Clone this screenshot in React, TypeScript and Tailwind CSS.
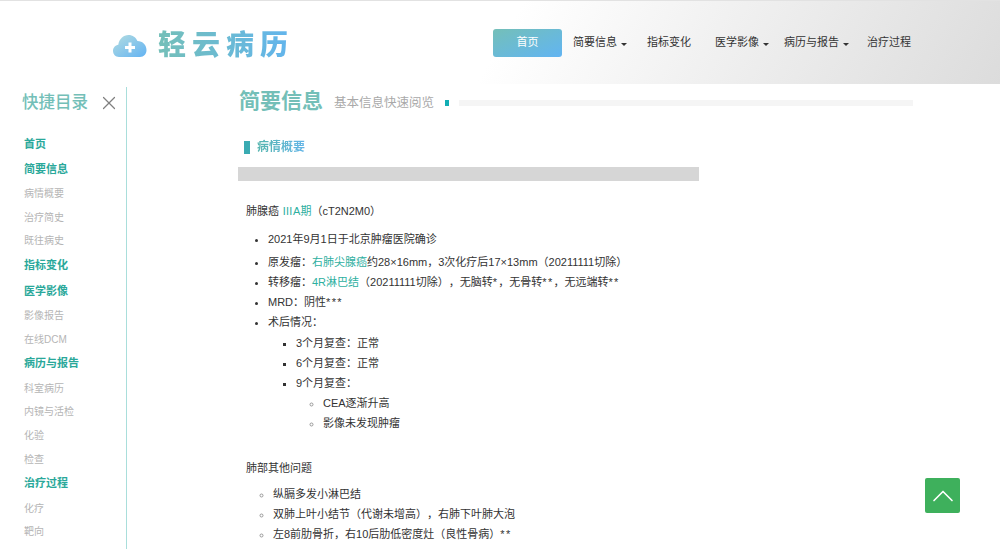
import { ChevronUp, X } from 'lucide-react';

const cjk = "font-['Liberation_Sans','Noto_Sans_CJK_SC',sans-serif]";

function Caret() {
  return <span className="ml-[4px] mt-[4px] inline-block border-x-[3.500px] border-t-[3.500px] border-x-transparent border-t-[#333]" />;
}

function Logo() {
  return (
    <div className="flex items-center">
      <svg width="34" height="24" viewBox="0 0 34 24">
        <defs>
          <linearGradient id="cloud" x1="0" y1="0" x2="1" y2="1">
            <stop offset="0" stopColor="#b4dde0" />
            <stop offset="1" stopColor="#63b3f3" />
          </linearGradient>
        </defs>
        <path
          d="M6 23C2.500 23 0 20.300 0 16.800C0 13.600 2.300 11.200 5.300 10.700C6 5 10.500 1 15.500 1C19.700 1 23 3.400 24.400 7C29.800 7 33.500 11 33.500 16C33.500 20 30.800 23 27 23Z"
          fill="url(#cloud)"
        />
        <path d="M15.500 8.500H18.500V12H22V15H18.500V18.500H15.500V15H12V12H15.500Z" fill="#fff" />
      </svg>
      <span className="ml-[11px] bg-gradient-to-r from-[#74bfb8] to-[#62b4ee] bg-clip-text text-[28px] leading-[36px] font-black tracking-[6px] text-transparent">
        轻云病历
      </span>
    </div>
  );
}

function Header() {
  const nav = [
    { label: '简要信息', caret: true, w: 'w-[74px]' },
    { label: '指标变化', caret: false, w: 'w-[68px]' },
    { label: '医学影像', caret: true, w: 'w-[69px]' },
    { label: '病历与报告', caret: true, w: 'w-[83px]' },
    { label: '治疗过程', caret: false, w: 'w-[45px]' },
  ];
  return (
    <header className="flex h-[84px] items-center border-t border-[#e2e2e2] bg-[linear-gradient(120deg,#ffffff_50%,#dcdcdc_100%)] pl-[113px]">
      <div className="w-[380px] pt-[7px]">
        <Logo />
      </div>
      <nav className="flex items-center text-[11px] text-[#333]">
        <a className="mr-[11px] flex h-[28px] w-[69px] items-center justify-center rounded-[3px] bg-gradient-to-br from-[#74bfb8] to-[#62b4f2] text-white">
          首页
        </a>
        {nav.map((item) => (
          <a key={item.label} className={`flex items-center whitespace-nowrap ${item.w}`}>
            {item.label}
            {item.caret && <Caret />}
          </a>
        ))}
      </nav>
    </header>
  );
}

function Sidebar() {
  const items: [string, boolean][] = [
    ['首页', true],
    ['简要信息', true],
    ['病情概要', false],
    ['治疗简史', false],
    ['既往病史', false],
    ['指标变化', true],
    ['医学影像', true],
    ['影像报告', false],
    ['在线DCM', false],
    ['病历与报告', true],
    ['科室病历', false],
    ['内镜与活检', false],
    ['化验', false],
    ['检查', false],
    ['治疗过程', true],
    ['化疗', false],
    ['靶向', false],
    ['免疫', false],
  ];
  return (
    <aside className="mt-[3px] h-[600px] w-[127px] shrink-0 border-r border-[#a9dedb] pl-[22px]">
      <div className="flex h-[30px] items-center pt-[1px]">
        <span className="text-[16.500px] font-medium text-[#74bfb8]">快捷目录</span>
        <X className="ml-[10px] text-[#808080]" size={22} strokeWidth={1.3} />
      </div>
      <ul className="mt-[14px] pl-[2px]">
        {items.map(([label, main]) => (
          <li
            key={label}
            className={
              main
                ? 'flex h-[25.500px] items-center text-[11px] font-semibold text-[#2aa89a]'
                : 'flex h-[23.600px] items-center text-[10px] text-[#b5b5b5]'
            }
          >
            {label}
          </li>
        ))}
      </ul>
    </aside>
  );
}

function Teal({ children }: { children: string }) {
  return <span className="text-[#2eaf9f]">{children}</span>;
}

// asterisks run wider in the reference's font
function Stars({ children }: { children: string }) {
  return <span className="tracking-[1.300px]">{children}</span>;
}

function Content() {
  return (
    <main className="w-[786px] pl-[111px] text-[11px] leading-[20.100px] text-[#333] [text-spacing-trim:space-all]">
      <div className="mt-[2px] flex h-[30px] items-center">
        <h2 className="ml-[1px] text-[21px] font-semibold text-[#74bfb8]">简要信息</h2>
        <span className="ml-[11px] mt-[5px] text-[12.500px] text-[#a9a9a9]">基本信息快速阅览</span>
        <span className="ml-[11px] mt-[4px] h-[6px] w-[4px] bg-[#12aeb4]" />
        <span className="ml-[10px] mt-[4px] h-[6px] flex-1 bg-[#f5f5f5]" />
      </div>
      <div className="mt-[23px] flex h-[16px] items-center pl-[6px]">
        <span className="h-[13px] w-[6px] bg-[#3aabb2]" />
        <h3 className="ml-[7px] bg-gradient-to-r from-[#56b5ae] to-[#62b4e8] bg-clip-text text-[12px] font-bold text-transparent">
          病情概要
        </h3>
      </div>
      <div className="mt-[12px] h-[14px] w-[461px] bg-[#d6d6d6]" />
      <div className="pl-[8px]">
        <p className="mt-[20px]">
          肺腺癌 <Teal>ⅢA期</Teal>（cT2N2M0）
        </p>
        <ul className="mt-[8px] list-disc pl-[22px]">
          <li className="mb-[3px]">2021年9月1日于北京肿瘤医院确诊</li>
          <li>
            原发瘤：<Teal>右肺尖腺癌</Teal>约28×16mm，3次化疗后17×13mm（20211111切除）
          </li>
          <li>
            转移瘤：<Teal>4R淋巴结</Teal>（20211111切除），无脑转<Stars>*</Stars>，无骨转<Stars>**</Stars>，无远端转<Stars>**</Stars>
          </li>
          <li>
            MRD：阴性<Stars>***</Stars>
          </li>
          <li>
            术后情况：
            <ul className="list-[square] pl-[28px]">
              <li>3个月复查：正常</li>
              <li>6个月复查：正常</li>
              <li>
                9个月复查：
                <ul className="list-[circle] pl-[27px] marker:text-[#999]">
                  <li>CEA逐渐升高</li>
                  <li>影像未发现肿瘤</li>
                </ul>
              </li>
            </ul>
          </li>
        </ul>
        <p className="mt-[25px]">肺部其他问题</p>
        <ul className="mt-[6px] list-[circle] pl-[27px] marker:text-[#999]">
          <li>纵膈多发小淋巴结</li>
          <li>双肺上叶小结节（代谢未增高），右肺下叶肺大泡</li>
          <li>
            左8前肋骨折，右10后肋低密度灶（良性骨病）<Stars>**</Stars>
          </li>
        </ul>
      </div>
    </main>
  );
}

export default function App() {
  return (
    <div className={`relative h-[549px] w-[1000px] overflow-hidden bg-white ${cjk}`}>
      <Header />
      <div className="flex">
        <Sidebar />
        <Content />
      </div>
      <button className="absolute left-[925px] top-[478px] flex h-[35px] w-[35px] items-center justify-center rounded-[2px] bg-[#3eb05c] text-white">
        <ChevronUp className="shrink-0" size={36} strokeWidth={1.1} />
      </button>
    </div>
  );
}
